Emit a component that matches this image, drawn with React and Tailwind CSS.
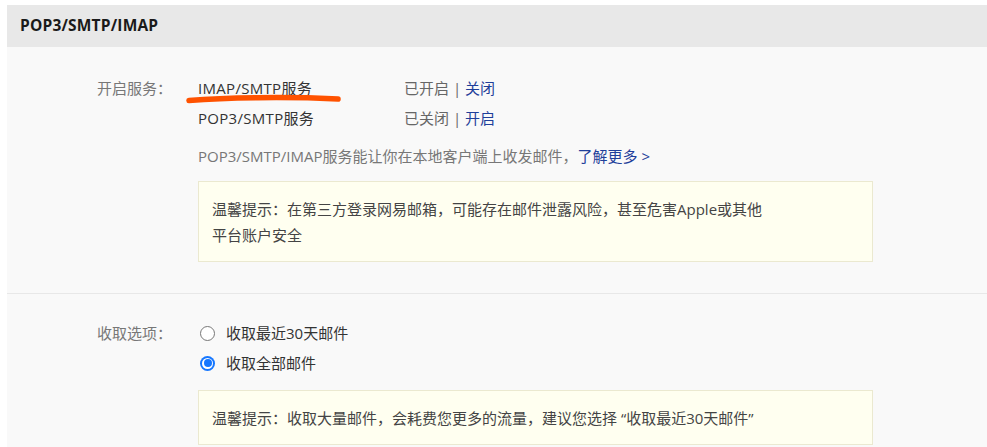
import React from "react";

const font = { fontFamily: '"Open Sans", "Noto Sans CJK SC", sans-serif' };

function Radio({ checked }) {
  return checked ? (
    <span className="w-[15px] h-[15px] rounded-full bg-[#1677ff] flex items-center justify-center">
      <span className="w-[11px] h-[11px] rounded-full bg-white flex items-center justify-center">
        <span className="w-[8px] h-[8px] rounded-full bg-[#1677ff]" />
      </span>
    </span>
  ) : (
    <span className="w-[15px] h-[15px] rounded-full border-[1.5px] border-[#777] bg-white" />
  );
}

export default function App() {
  return (
    <div className="w-[987px] h-[447px] bg-white pt-[5px] pl-[7px] overflow-hidden text-[15px]" style={font}>
      <div className="h-[42px] bg-[#e8e8e8] flex items-center pl-[13px] font-bold text-[15.5px] tracking-[0.2px] text-[#1a1a1a]">
        POP3/SMTP/IMAP
      </div>
      <div className="bg-[#f9f9f9] h-[400px]">
        <div className="pt-[26px] pl-[90px] flex">
          <div className="w-[101px] h-[30px] leading-[30px] text-[#777]">开启服务：</div>
          <div className="flex flex-col">
            <div className="flex h-[30px] leading-[30px] relative">
              <span className="w-[206px] text-[#333] tracking-[0.3px]">IMAP/SMTP服务</span>
              <span className="text-[#666]">已开启 | <span className="text-[#1f3f9a]">关闭</span></span>
              <svg className="absolute left-[-12px] top-[20px]" width="158" height="12" viewBox="0 0 158 12">
                <path d="M3 7.5 C 40 4.5, 100 3.5, 152 6" stroke="#ff5200" strokeWidth="5.5" strokeLinecap="round" fill="none" />
              </svg>
            </div>
            <div className="flex h-[30px] leading-[30px]">
              <span className="w-[206px] text-[#333] tracking-[0.3px]">POP3/SMTP服务</span>
              <span className="text-[#666]">已关闭 | <span className="text-[#1f3f9a]">开启</span></span>
            </div>
            <div className="mt-[8px] h-[30px] leading-[30px] text-[#777]">
              POP3/SMTP/IMAP服务能让你在本地客户端上收发邮件，<span className="text-[#1f3f9a]">了解更多 &gt;</span>
            </div>
            <div className="mt-[10px] w-[675px] border border-[#ebe9d0] bg-[#fffff0] pt-[14px] pb-[13px] pl-[13px] leading-[26px] text-[#444]">
              <div>温馨提示：在第三方登录网易邮箱，可能存在邮件泄露风险，甚至危害Apple或其他</div>
              <div>平台账户安全</div>
            </div>
          </div>
        </div>
        <div className="mt-[31px] border-t border-[#e8e8e8]" />
        <div className="pt-[24px] pl-[90px] flex">
          <div className="w-[101px] h-[30px] leading-[30px] text-[#777]">收取选项：</div>
          <div className="flex flex-col">
            <div className="flex items-center h-[30px] pl-[2px] gap-[11px] text-[#333]">
              <Radio />
              <span>收取最近30天邮件</span>
            </div>
            <div className="flex items-center h-[30px] pl-[2px] gap-[11px] text-[#333]">
              <Radio checked />
              <span>收取全部邮件</span>
            </div>
            <div className="mt-[12px] w-[675px] border border-[#ebe9d0] bg-[#fffff0] pt-[14px] pb-[13px] pl-[13px] leading-[26px] text-[#444]">
              <div>温馨提示：收取大量邮件，会耗费您更多的流量，建议您选择 “收取最近30天邮件”</div>
            </div>
          </div>
        </div>
      </div>
    </div>
  );
}
